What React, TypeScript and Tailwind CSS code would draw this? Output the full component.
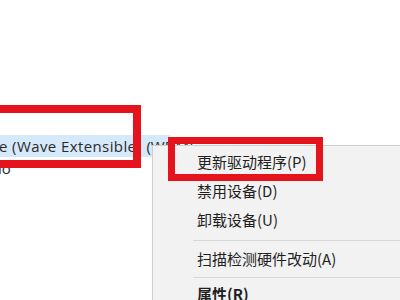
import React from "react";

export default function App() {
  const cjk = { fontFamily: '"Noto Sans CJK SC", "Noto Sans", sans-serif' };
  return (
    <div className="relative w-[400px] h-[300px] overflow-hidden bg-white" style={{ fontFamily: '"Open Sans", "Noto Sans CJK SC", sans-serif' }}>
      {/* tree list */}
      <div className="flex flex-col pt-[135px]">
        <div className="h-[22px] w-[170px] bg-[#d5e9fa] flex items-center whitespace-nowrap text-[15px] text-[#2b2b2b]">
          <span className="tracking-[0.4px] -ml-[1px]">e (Wave Extensible</span>
          <span className="ml-[10px]">(WDM)</span>
        </div>
        <div className="h-[22px] flex items-center text-[15px] text-[#2b2b2b] -ml-[2px]">io</div>
      </div>

      {/* left red annotation */}
      <div className="absolute left-[-10px] top-[105px] w-[151px] h-[63px] border-[8px] border-[#e5131c]" />

      {/* context menu */}
      <div className="absolute left-[152px] top-[145px] w-[260px] h-[170px] bg-[#f2f2f2] border border-[#cfcfcf] shadow-[2px_2px_3px_rgba(0,0,0,0.15)] pt-[2px] text-[15px] text-[#1f1f1f]" style={cjk}>
        <div className="h-[29px] flex items-center pl-[44px]">更新驱动程序(P)</div>
        <div className="h-[29px] flex items-center pl-[44px]">禁用设备(D)</div>
        <div className="h-[29px] flex items-center pl-[44px]">卸载设备(U)</div>
        <div className="h-[10px] flex items-center pl-[40px]">
          <div className="h-px w-full bg-[#d7d7d7]" />
        </div>
        <div className="h-[29px] flex items-center pl-[44px]">扫描检测硬件改动(A)</div>
        <div className="h-[6px] flex items-center pl-[40px]">
          <div className="h-px w-full bg-[#d7d7d7]" />
        </div>
        <div className="h-[29px] flex items-center pl-[44px] font-bold">属性(R)</div>
      </div>

      {/* menu red annotation */}
      <div className="absolute left-[168px] top-[137px] w-[155px] h-[44px] border-[7px] border-[#e5131c]" />
    </div>
  );
}
